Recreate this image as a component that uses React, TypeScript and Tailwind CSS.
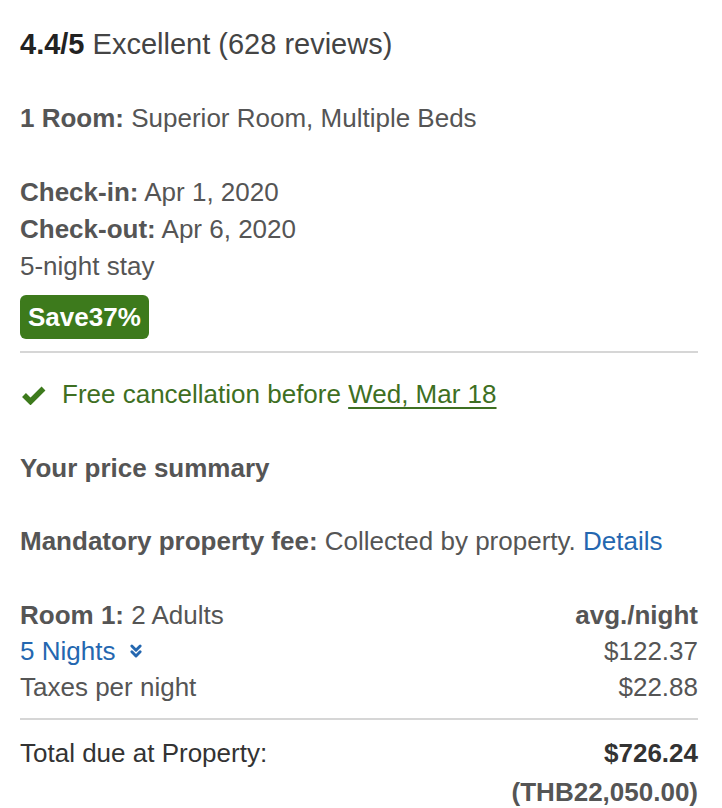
import { ChevronsDown } from "lucide-react";

export default function App() {
  return (
    <div
      className="h-[808px] w-[722px] bg-white pl-5 pr-6 pt-[26px] text-[26px] leading-[37px] text-[#555]"
      style={{ fontFamily: '"Liberation Sans", Arial, sans-serif' }}
    >
      <p className="text-[29px] text-[#444]">
        <span className="font-bold text-[#222]">4.4/5</span> Excellent (628 reviews)
      </p>

      <p className="mt-[37px]">
        <span className="font-bold">1 Room:</span> Superior Room, Multiple Beds
      </p>

      <div className="mt-[37px]">
        <p>
          <span className="font-bold">Check-in:</span> Apr 1, 2020
        </p>
        <p>
          <span className="font-bold">Check-out:</span> Apr 6, 2020
        </p>
        <p>5-night stay</p>
      </div>

      <span className="mt-[10px] inline-flex h-[44px] items-center rounded-md bg-[#3d7a1c] px-[8px] font-bold text-white">
        Save37%
      </span>

      <div className="mt-3 border-t-2 border-[#d6d6d6]" />

      {/* cancellation */}
      <div className="mt-[23px] flex items-center gap-4 text-[#3e6f22]">
        <svg width="24" height="20" viewBox="0 0 24 20" className="ml-[2px]">
          <path d="M2 10 L8.5 16.5 L21.5 3.5" fill="none" stroke="#3d7a1c" strokeWidth="5.5" />
        </svg>
        <p>
          Free cancellation before <span className="underline underline-offset-4">Wed, Mar 18</span>
        </p>
      </div>

      <p className="mt-[37px] font-bold">Your price summary</p>

      <p className="mt-[36px]">
        <span className="font-bold">Mandatory property fee:</span> Collected by property.{" "}
        <span className="text-[#2467b0]">Details</span>
      </p>

      <div className="mt-[37px] leading-[36px]">
        <div className="flex justify-between">
          <p>
            <span className="font-bold">Room 1:</span> 2 Adults
          </p>
          <p className="font-bold">avg./night</p>
        </div>
        <div className="flex justify-between">
          <p className="flex items-center gap-[11px] text-[#2467b0]">
            5 Nights <ChevronsDown size={20} strokeWidth={3.5} />
          </p>
          <p>$122.37</p>
        </div>
        <div className="flex justify-between">
          <p>Taxes per night</p>
          <p>$22.88</p>
        </div>
      </div>

      <div className="mt-[13px] border-t-2 border-[#d6d6d6]" />

      <div className="mt-[15px] leading-[36px]">
        <div className="flex justify-between text-[#333]">
          <p>Total due at Property:</p>
          <p className="font-bold">$726.24</p>
        </div>
        <p className="mt-[3px] text-right font-bold">(THB22,050.00)</p>
      </div>
    </div>
  );
}
